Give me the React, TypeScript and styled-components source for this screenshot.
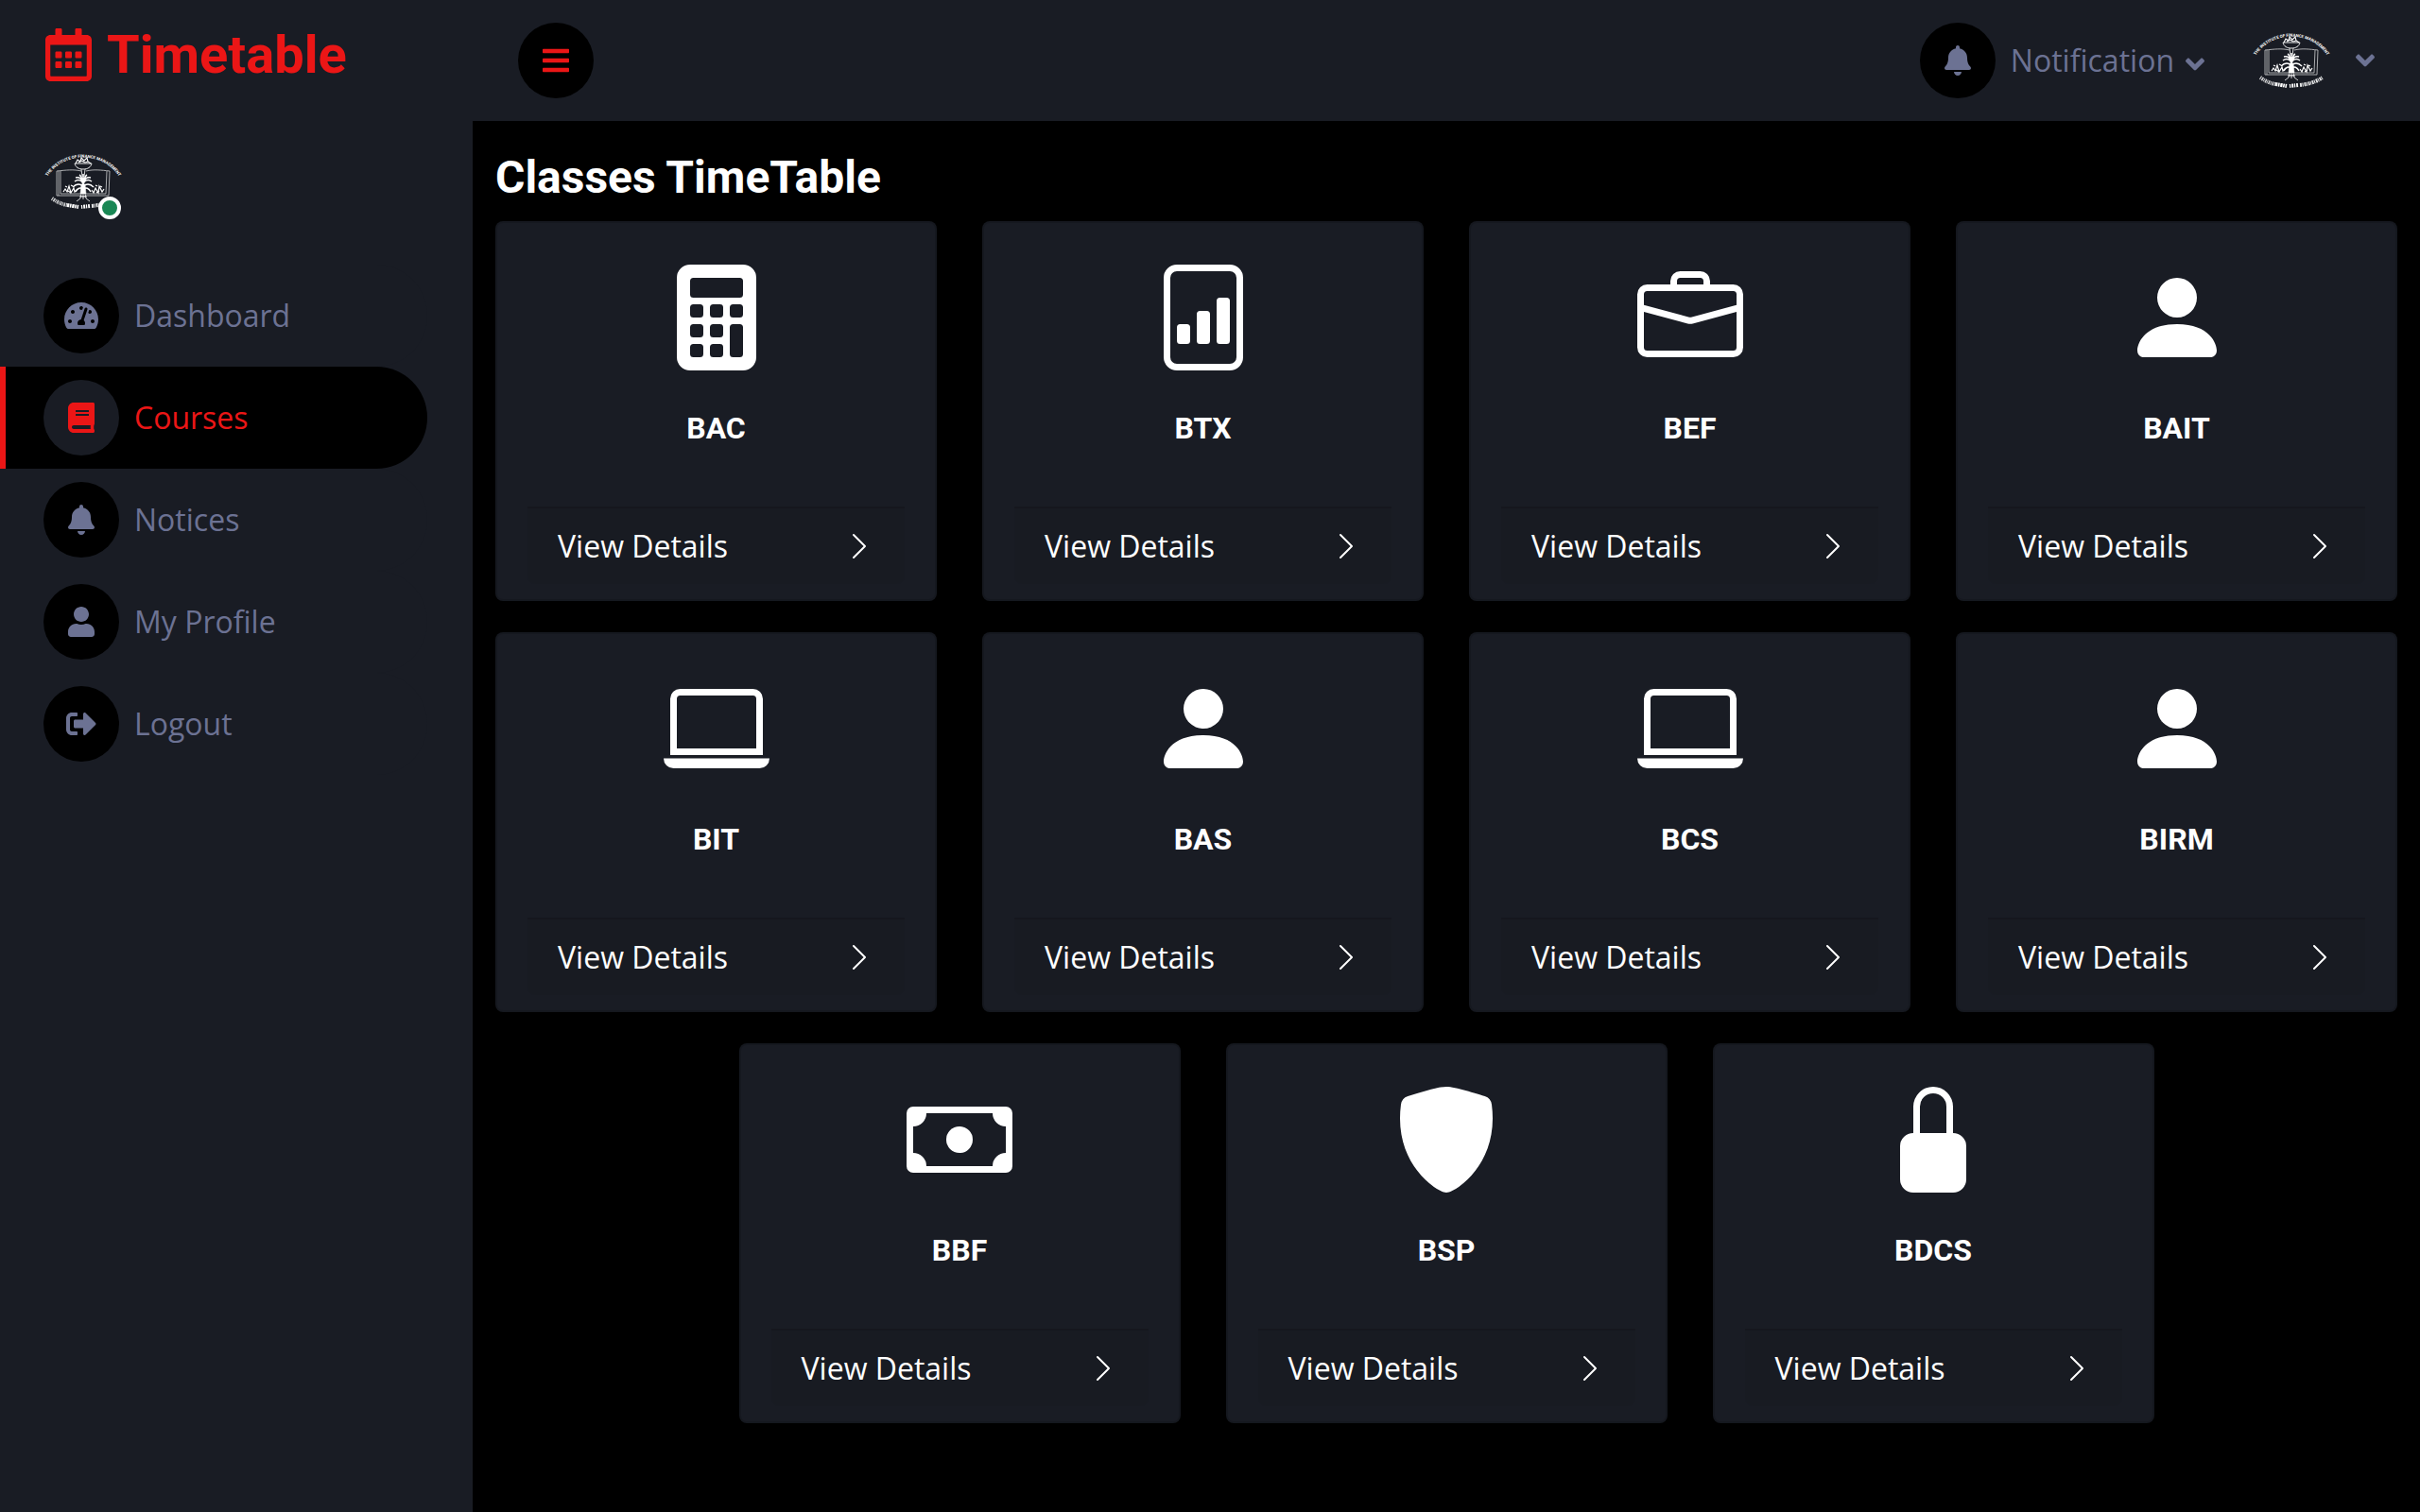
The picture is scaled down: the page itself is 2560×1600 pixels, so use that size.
import React from 'react';
import styled, { createGlobalStyle } from 'styled-components';
import { FaAngleDown, FaBars, FaBell, FaBook, FaRegCalendarAlt, FaSignOutAlt, FaTachometerAlt, FaUser } from 'react-icons/fa';
import {
  BsBriefcase,
  BsCalculatorFill,
  BsCash,
  BsChevronRight,
  BsFileBarGraph,
  BsLaptop,
  BsLockFill,
  BsPersonFill,
  BsShieldFill,
} from 'react-icons/bs';
import type { IconType } from 'react-icons';

const color = {
  primary: '#eb1616',
  panel: '#191c24',
  page: '#000000',
  muted: '#6c7293',
  white: '#ffffff',
  online: '#198754',
};

const GlobalStyle = createGlobalStyle`
  *, *::before, *::after { box-sizing: border-box; }
  body {
    margin: 0;
    background: ${color.page};
    color: ${color.muted};
    font-family: "Open Sans", "Noto Sans", sans-serif;
    font-size: 32px;
    line-height: 48px;
  }
  a { color: inherit; text-decoration: none; }
  svg { display: block; flex-shrink: 0; }
`;

const Shell = styled.div`
  display: flex;
  min-height: 100vh;
`;

const Sidebar = styled.aside`
  flex: 0 0 500px;
  padding: 24px 48px 32px 0;
  background: ${color.panel};
`;

const Brand = styled.a`
  display: flex;
  align-items: center;
  gap: 16px;
  padding-left: 48px;
  color: ${color.primary};
`;

const BrandIcon = styled(FaRegCalendarAlt)`
  width: 49px;
  height: 56px;
`;

const BrandName = styled.h3`
  margin: 0;
  font-family: Roboto, sans-serif;
  font-size: 56px;
  font-weight: 700;
  line-height: 68px;
`;

const Profile = styled.div`
  display: flex;
  margin: 60px 0 48px 48px;
`;

const Avatar = styled.div`
  position: relative;
  width: 80px;
  height: 80px;
`;

const OnlineDot = styled.span`
  position: absolute;
  right: 0;
  bottom: 0;
  width: 24px;
  height: 24px;
  border: 4px solid ${color.white};
  border-radius: 50%;
  background: ${color.online};
`;

const Menu = styled.nav`
  display: flex;
  flex-direction: column;
`;

const Disc = styled.span<{ $raised?: boolean }>`
  display: inline-flex;
  flex-shrink: 0;
  align-items: center;
  justify-content: center;
  width: 80px;
  height: 80px;
  border-radius: 50%;
  background: ${(p) => (p.$raised ? color.panel : color.page)};
  svg { width: 36px; height: 32px; }
`;

const MenuLink = styled.a<{ $active?: boolean }>`
  display: flex;
  align-items: center;
  gap: 16px;
  padding: 14px 40px;
  border-left: 6px solid ${(p) => (p.$active ? color.primary : color.panel)};
  border-radius: 0 60px 60px 0;
  background: ${(p) => (p.$active ? color.page : color.panel)};
  && { color: ${(p) => (p.$active ? color.primary : color.muted)}; }
`;

const Content = styled.div`
  flex: 1;
  min-width: 0;
`;

const TopBar = styled.header`
  display: flex;
  align-items: center;
  justify-content: space-between;
  padding: 24px 48px;
  background: ${color.panel};
`;

const IconButton = styled.button`
  display: flex;
  align-items: center;
  justify-content: center;
  width: 80px;
  height: 80px;
  padding: 0;
  border: 0;
  border-radius: 50%;
  background: ${color.page};
  color: ${color.primary};
`;

const TopActions = styled.div`
  display: flex;
  align-items: center;
  gap: 52px;
`;

const Caret = styled(FaAngleDown)`
  width: 20px;
  height: 32px;
`;

const DropButton = styled.button<{ $gap: number }>`
  display: flex;
  align-items: center;
  gap: ${(p) => p.$gap}px;
  padding: 0;
  border: 0;
  background: none;
  color: ${color.muted};
  font: inherit;
`;

const DropLabel = styled.span`
  display: flex;
  align-items: center;
  gap: 12px;
  svg { margin-top: 8px; }
`;

const Main = styled.main`
  padding-top: 30px;
`;

const PageTitle = styled.h4`
  margin: 0 24px 16px;
  color: ${color.white};
  font-family: Roboto, sans-serif;
  font-size: 48px;
  font-weight: 700;
  line-height: 60px;
`;

const CardRow = styled.div`
  display: flex;
  flex-wrap: wrap;
  justify-content: center;
`;

const CardCell = styled.div`
  flex: 0 0 25%;
  padding: 0 24px 33px;
`;

const Card = styled.article`
  padding: 44px 32px 16px;
  border: 2px solid rgba(0, 0, 0, 0.125);
  border-radius: 8px;
  background: ${color.panel};
  color: ${color.white};
`;

const CardHead = styled.div`
  display: flex;
  flex-direction: column;
  align-items: center;
  gap: 40px;
  padding-bottom: 62px;
`;

const CardTitle = styled.h6`
  margin: 0;
  font-family: Roboto, sans-serif;
  font-size: 32px;
  font-weight: 700;
  line-height: 42px;
`;

const CardFooter = styled.a`
  display: flex;
  align-items: center;
  justify-content: space-between;
  padding: 16px 32px;
  border-top: 2px solid rgba(0, 0, 0, 0.125);
  border-radius: 0 0 8px 8px;
  background: rgba(0, 0, 0, 0.03);
`;

function Crest({ id }: { id: string }) {
  return (
    <svg width="80" height="80" viewBox="0 0 80 80" fill="none" stroke="#fff" overflow="visible" role="img" aria-label="Institute crest">
      <path id={`${id}-top`} d="M2 35C19 8 61 8 78 35" stroke="none" />
      <text fill="#fff" stroke="none" fontSize="4.4" fontWeight="700" fontFamily="Roboto, sans-serif" textAnchor="middle">
        <textPath href={`#${id}-top`} startOffset="50%">
          THE INSTITUTE OF FINANCE MANAGEMENT
        </textPath>
      </text>
      <g strokeWidth="0.9" opacity="0.7">
        <path d="M38 29c-8-2-16-1-26 0v26h25l3 1 3-1h24l1-26c-9-1-17-2-25 0" />
        <path d="M16 29v24h21M14 29v26M65 29l-1 24H43" />
      </g>
      <path d="M31 21h18c-1 4-4 6-9 6s-8-2-9-6z" strokeWidth="0.9" />
      <path d="M32 21l2-4 3 2 1-4 3 3 3-3 1 4 3 2M35 20l3-2 4 2 3-1" strokeWidth="1.1" />
      <path d="M38 27l1 8M42 27l-1 8" strokeWidth="0.8" />
      <path
        d="M40 43c-1-4-5-6-9-3M40 43c-1-6-4-8-8-7M40 43c-1-6-2-9-4-10M40 43V32M40 43c1-6 2-9 4-10M40 43c1-6 4-8 8-7M40 43c1-4 5-6 9-3M40 45c-4-3-8-2-11 1M40 45c4-3 8-2 11 1M40 48c-3-2-6-1-8 3M40 48c3-2 6-1 8 3"
        strokeWidth="1.5"
      />
      <path d="M38 43l-1 10h6l-1-10z" fill="#fff" strokeWidth="0.5" />
      <path
        d="M19 51l2-3 2 3 2-6 2 7 3-5 1 4 3-3M49 49l2 3 2-5 3 5 1-7 3 6 2-3M21 45l2 1M27 44l2 1M53 44l2 1M58 45l2 1M24 50l3 2M54 52l3-2"
        strokeWidth="1.2"
      />
      <path d="M38 53l-1 5-4 3M42 53l1 5 4 3M40 53v6M36 56h8" strokeWidth="0.8" />
      <g strokeWidth="4">
        <path d="M7 58C13 62 17 64 23 65" strokeDasharray="1 0.8 1.6 0.7" opacity="0.8" />
        <path d="M23 65L35 67" strokeDasharray="2.4 0.6 1.6 0.7" />
        <path d="M38 67L47 66" strokeDasharray="1.2 1 2 0.8" />
        <path d="M49 66C59 65 67 62 73 58" strokeDasharray="1.8 0.6 1 0.9" opacity="0.9" />
      </g>
    </svg>
  );
}

type MenuItem = { label: string; icon: IconType; active?: boolean };

const menu: MenuItem[] = [
  { label: 'Dashboard', icon: FaTachometerAlt },
  { label: 'Courses', icon: FaBook, active: true },
  { label: 'Notices', icon: FaBell },
  { label: 'My Profile', icon: FaUser },
  { label: 'Logout', icon: FaSignOutAlt },
];

const classes: { name: string; icon: IconType }[] = [
  { name: 'BAC', icon: BsCalculatorFill },
  { name: 'BTX', icon: BsFileBarGraph },
  { name: 'BEF', icon: BsBriefcase },
  { name: 'BAIT', icon: BsPersonFill },
  { name: 'BIT', icon: BsLaptop },
  { name: 'BAS', icon: BsPersonFill },
  { name: 'BCS', icon: BsLaptop },
  { name: 'BIRM', icon: BsPersonFill },
  { name: 'BBF', icon: BsCash },
  { name: 'BSP', icon: BsShieldFill },
  { name: 'BDCS', icon: BsLockFill },
];

function ClassCard({ name, icon: Icon }: { name: string; icon: IconType }) {
  return (
    <CardCell>
      <Card>
        <CardHead>
          <Icon size={112} />
          <CardTitle>{name}</CardTitle>
        </CardHead>
        <CardFooter href="#">
          View Details
          <BsChevronRight size={32} />
        </CardFooter>
      </Card>
    </CardCell>
  );
}

export default function App() {
  return (
    <>
      <GlobalStyle />
      <Shell>
        <Sidebar>
          <Brand href="#">
            <BrandIcon />
            <BrandName>Timetable</BrandName>
          </Brand>
          <Profile>
            <Avatar>
              <Crest id="side" />
              <OnlineDot />
            </Avatar>
          </Profile>
          <Menu>
            {menu.map(({ label, icon: Icon, active }) => (
              <MenuLink key={label} href="#" $active={active}>
                <Disc $raised={active}>
                  <Icon />
                </Disc>
                {label}
              </MenuLink>
            ))}
          </Menu>
        </Sidebar>
        <Content>
          <TopBar>
            <IconButton aria-label="Toggle sidebar">
              <FaBars size={32} />
            </IconButton>
            <TopActions>
              <DropButton $gap={16}>
                <Disc>
                  <FaBell />
                </Disc>
                <DropLabel>
                  Notification
                  <Caret />
                </DropLabel>
              </DropButton>
              <DropButton $gap={28} aria-label="Account">
                <Crest id="account" />
                <Caret />
              </DropButton>
            </TopActions>
          </TopBar>
          <Main>
            <PageTitle>Classes TimeTable</PageTitle>
            <CardRow>
              {classes.map((item) => (
                <ClassCard key={item.name} {...item} />
              ))}
            </CardRow>
          </Main>
        </Content>
      </Shell>
    </>
  );
}
